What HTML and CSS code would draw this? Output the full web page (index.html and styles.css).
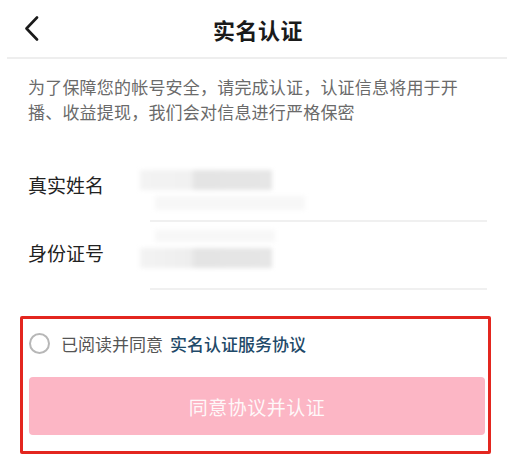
FILE: index.html
```html
<!DOCTYPE html>
<html lang="zh-CN">
<head>
<meta charset="UTF-8">
<meta name="viewport" content="width=device-width, initial-scale=1.0">
<title>实名认证</title>
<link rel="stylesheet" href="styles.css">
</head>
<body>
    <header class="topbar">
        <a href="#" class="back-btn" aria-label="返回">
            <svg width="15" height="25" viewBox="0 0 15 25">
                <polyline points="13,1.5 2.5,12.5 13,23.5" fill="none" stroke="#1a1a1a" stroke-width="2.6" stroke-linecap="round" stroke-linejoin="round"/>
            </svg>
        </a>
        <h1 class="topbar-title">实名认证</h1>
        <span></span>
    </header>

    <main class="page">
        <p class="intro">为了保障您的帐号安全，请完成认证，认证信息将用于开播、收益提现，我们会对信息进行严格保密</p>

        <div class="form">
            <div class="field">
                <label class="field-label">真实姓名</label>
                <div class="field-value">
                    <span class="mask mask-top"></span>
                    <span class="mask mask-soft mask-under"></span>
                </div>
            </div>
            <div class="field">
                <label class="field-label">身份证号</label>
                <div class="field-value">
                    <span class="mask mask-soft mask-over"></span>
                    <span class="mask mask-mid"></span>
                </div>
            </div>
        </div>

        <section class="agree-box">
            <label class="agree-row">
                <span class="radio"></span>
                <span class="agree-text">已阅读并同意</span>
                <a href="#" class="agree-link">实名认证服务协议</a>
            </label>
            <button class="submit-btn" disabled>同意协议并认证</button>
        </section>
    </main>
</body>
</html>
```

FILE: styles.css
```css
/* Base */
body {
    margin: 0;
    background: #fff;
    font-family: "Noto Sans CJK SC", "Noto Sans", sans-serif;
    color: #222;
    width: 520px;
}

/* Top bar */
.topbar {
    display: grid;
    grid-template-columns: 1fr auto 1fr;
    align-items: center;
    height: 57px;
    margin: 0 13px 0 7px;
    border-bottom: 2px solid #eeeeee;
}

.back-btn {
    display: flex;
    padding-left: 17px;
    padding-bottom: 1px;
}

.topbar-title {
    margin: 0;
    font-size: 22px;
    font-weight: 700;
    color: #1a1a1a;
    letter-spacing: 0.5px;
    padding-left: 2px;
}

/* Content */
.intro {
    margin: 15px 40px 0 28px;
    font-size: 17px;
    line-height: 25px;
    color: #6a6a6a;
    letter-spacing: 0.2px;
}

.form {
    margin-top: 30px;
}

.field {
    display: flex;
    height: 68px;
}

.field-label {
    width: 122px;
    padding: 0 0 8px 28px;
    display: flex;
    align-items: center;
    font-size: 19px;
    color: #222;
}

.field-value {
    position: relative;
    flex: 1;
    margin-right: 33px;
    border-bottom: 2px solid #f0f0f0;
}

/* blurred values */
.mask {
    position: absolute;
    filter: blur(2px);
    background: #e6e6e6;
}

.mask-top {
    left: -10px;
    top: 16px;
    width: 132px;
    height: 20px;
    background: linear-gradient(90deg, #f3f3f3 0, #f1f1f1 38%, #e4e4e4 42%, #e6e6e6 100%);
}

.mask-mid {
    left: -10px;
    top: 26px;
    width: 132px;
    height: 20px;
    background: linear-gradient(90deg, #f3f3f3 0, #eeeeee 38%, #e4e4e4 42%, #e6e6e6 100%);
}

.mask-soft {
    background: #f7f7f7;
}

.mask-under {
    left: 5px;
    top: 42px;
    width: 150px;
    height: 14px;
}

.mask-over {
    left: 5px;
    top: 8px;
    width: 120px;
    height: 12px;
}

/* Agreement */
.agree-box {
    margin: 26px 29px 0 20px;
    border: 3px solid #e3261f;
    border-radius: 2px;
    padding: 0 3px 16px 6px;
}

.agree-row {
    display: flex;
    align-items: center;
    height: 48px;
    font-size: 17px;
}

.radio {
    width: 17px;
    height: 17px;
    border: 2px solid #b7b7b7;
    border-radius: 50%;
    margin-right: 11px;
}

.agree-text {
    color: #555;
    margin-right: 7px;
}

.agree-link {
    color: #1f4a69;
    text-decoration: none;
    font-weight: 500;
}

.submit-btn {
    display: block;
    width: 100%;
    height: 58px;
    margin-top: 10px;
    border: none;
    border-radius: 4px;
    background: #fcb6c5;
    color: rgba(255, 255, 255, 0.92);
    font-family: inherit;
    font-size: 19px;
    letter-spacing: 0.5px;
}
```
